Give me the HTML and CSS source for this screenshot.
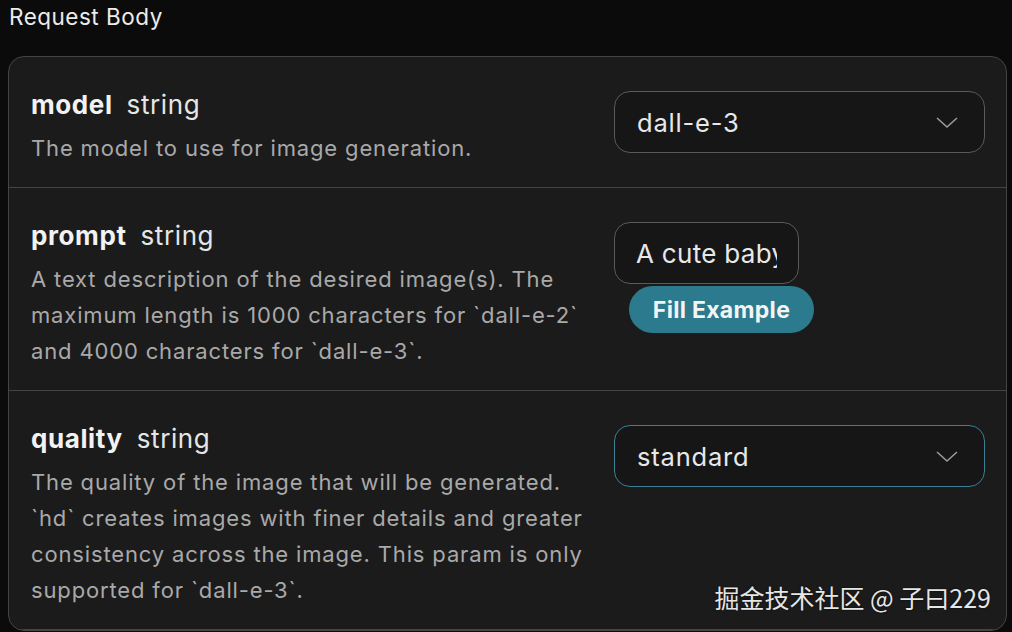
FILE: index.html
```html
<!DOCTYPE html>
<html>
<head>
<meta charset="utf-8">
<link rel="stylesheet" href="styles.css">
</head>
<body>
<div class="page">
  <div class="title">Request Body</div>
  <div class="card">
    <div class="row">
      <div class="info">
        <div class="name"><b>model</b><span class="type">string</span></div>
        <div class="desc">The model to use for image generation.</div>
      </div>
      <div class="control">
        <div class="select"><span>dall-e-3</span>
          <svg class="chev" width="22" height="12" viewBox="0 0 22 12"><path d="M1 1 L11 10 L21 1" fill="none" stroke="#9a9a9a" stroke-width="1.6"/></svg>
        </div>
      </div>
    </div>
    <div class="row">
      <div class="info">
        <div class="name"><b>prompt</b><span class="type">string</span></div>
        <div class="desc">A text description of the desired image(s). The maximum length is 1000 characters for `dall-e-2` and 4000 characters for `dall-e-3`.</div>
      </div>
      <div class="control">
        <div class="input"><span>A cute baby sea otter</span></div>
        <button class="fill">Fill Example</button>
      </div>
    </div>
    <div class="row">
      <div class="info">
        <div class="name"><b>quality</b><span class="type">string</span></div>
        <div class="desc">The quality of the image that will be generated. `hd` creates images with finer details and greater consistency across the image. This param is only supported for `dall-e-3`.</div>
      </div>
      <div class="control">
        <div class="select focus"><span>standard</span>
          <svg class="chev" width="22" height="12" viewBox="0 0 22 12"><path d="M1 1 L11 10 L21 1" fill="none" stroke="#9a9a9a" stroke-width="1.6"/></svg>
        </div>
      </div>
    </div>
  </div>
  <div class="watermark">掘金技术社区 @ 子曰229</div>
</div>
</body>
</html>
```
FILE: styles.css
```css
html, body {
  margin: 0;
  padding: 0;
  background: #0b0b0b;
  overflow: hidden;
}
.page {
  position: relative;
  width: 1012px;
  height: 632px;
  padding: 0 5px 0 8px;
  box-sizing: border-box;
  font-family: Inter, "Noto Sans", sans-serif;
  color: #e8e8e8;
}
.title {
  font-size: 22.5px;
  letter-spacing: 0.5px;
  line-height: 34px;
  padding-left: 1px;
  color: #ececec;
  height: 56px;
}
.card {
  border: 1.5px solid #444;
  border-radius: 16px;
  background: #1b1b1c;
  overflow: hidden;
}
.row {
  display: grid;
  grid-template-columns: 1fr 371px;
  column-gap: 14px;
  padding: 32px 21px 21px 22px;
  border-bottom: 1.5px solid #444;
}
.info {
  min-width: 0;
}
.name {
  font-size: 26px;
  letter-spacing: 0.6px;
  line-height: 32px;
  color: #f2f2f2;
}
.name b {
  font-weight: 700;
  margin-right: 14px;
}
.type {
  color: #e6e6e6;
}
.desc {
  margin-top: 9px;
  font-size: 22px;
  line-height: 36px;
  color: #a9a9a9;
  letter-spacing: 0.85px;
}
.control {
  padding-top: 2px;
  display: flex;
  flex-direction: column;
  align-items: flex-start;
}
.select {
  box-sizing: border-box;
  width: 100%;
  height: 62px;
  border: 1.5px solid #5a5a5a;
  border-radius: 16px;
  background: #161617;
  display: flex;
  align-items: center;
  justify-content: space-between;
  padding: 0 26px 0 22px;
  font-size: 25.5px;
  letter-spacing: 0.8px;
  color: #e8e8e8;
}
.select.focus {
  border-color: #3b8097;
}
.chev {
  margin-top: 2px;
}
.input {
  box-sizing: border-box;
  width: 185px;
  height: 62px;
  border: 1.5px solid #5a5a5a;
  border-radius: 16px;
  background: #161617;
  padding: 0 21px 0 21px;
  font-size: 26px;
  letter-spacing: 0.3px;
  color: #e8e8e8;
  white-space: nowrap;
  display: flex;
  align-items: center;
}
.input span {
  display: block;
  flex: 1;
  min-width: 0;
  overflow: hidden;
}
.fill {
  margin: 2px 0 0 15px;
  height: 47px;
  width: 185px;
  border: none;
  border-radius: 24px;
  background: #2b7a8d;
  color: #f4f4f4;
  font-family: Inter, sans-serif;
  font-weight: 700;
  font-size: 23px;
  letter-spacing: 0.3px;
  padding: 0;
}
.watermark {
  position: absolute;
  right: 21px;
  top: 580px;
  font-family: "Noto Sans CJK SC", sans-serif;
  font-size: 25px;
  line-height: 34px;
  color: #e6e6e6;
  text-shadow: 0 0 2px rgba(0,0,0,0.8);
}
```
